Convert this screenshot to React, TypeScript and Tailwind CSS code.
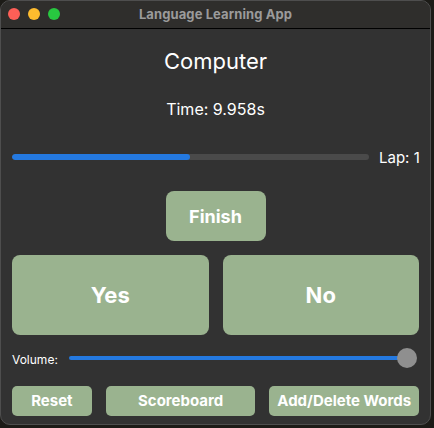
import React from "react";

export default function App() {
  const font = { fontFamily: "Inter, 'Noto Sans', 'Liberation Sans', sans-serif" };
  return (
    <div className="w-[434px] h-[428px] bg-[#1c1b17] overflow-hidden" style={font}>
      <div className="w-[431px] h-[425px] rounded-[10px] bg-[#323232] border border-[#4e4e4e] overflow-hidden flex flex-col">
        <div className="h-[28px] shrink-0 bg-[#2f2e2c] border-b border-black relative flex items-center justify-center">
          <div className="absolute left-[7px] top-[7px] flex gap-[8px]">
            <div className="w-[12px] h-[12px] rounded-full bg-[#fe5f57]" />
            <div className="w-[12px] h-[12px] rounded-full bg-[#febc2e]" />
            <div className="w-[12px] h-[12px] rounded-full bg-[#28c840]" />
          </div>
          <span className="text-[13px] font-bold text-[#9b9b9b] tracking-[0.1px]">Language Learning App</span>
        </div>
        <div className="flex flex-col px-[11px]">
          <div className="mt-[18px] h-[28px] flex items-center justify-center text-[22px] text-white leading-none">Computer</div>
          <div className="mt-[24px] h-[20px] flex items-center justify-center text-[16px] text-white leading-none">Time: 9.958s</div>
          <div className="mt-[28px] h-[20px] flex items-center">
            <div className="w-[357px] shrink-0 h-[6px] rounded-full bg-[#4a4a4a] overflow-hidden">
              <div className="h-full w-[178px] rounded-full bg-[#2479e0]" />
            </div>
            <span className="ml-[10px] text-[15px] text-white leading-none whitespace-nowrap">Lap: 1</span>
          </div>
          <div className="mt-[24px] flex justify-center">
            <button className="w-[100px] h-[50px] rounded-[8px] bg-[#9ab38f] text-white font-bold text-[18px]">Finish</button>
          </div>
          <div className="mt-[14px] flex gap-[14px]">
            <button className="w-[197px] h-[80px] rounded-[8px] bg-[#9ab38f] text-white font-bold text-[22px]">Yes</button>
            <button className="w-[197px] h-[80px] rounded-[8px] bg-[#9ab38f] text-white font-bold text-[22px]">No</button>
          </div>
          <div className="mt-[11px] h-[24px] flex items-center">
            <span className="text-[12px] text-white leading-none mt-[4px]">Volume:</span>
            <div className="ml-[11px] relative w-[348px] h-[24px] flex items-center">
              <div className="w-[338px] h-[4px] rounded-full bg-[#2479e0]" />
              <div className="absolute right-0 top-[2px] w-[20px] h-[20px] rounded-full bg-[#8f8f8f]" />
            </div>
          </div>
          <div className="mt-[16px] flex gap-[14px]">
            <button className="w-[80px] h-[30px] rounded-[5px] bg-[#9ab38f] text-white font-bold text-[15px]">Reset</button>
            <button className="w-[150px] h-[30px] rounded-[5px] bg-[#9ab38f] text-white font-bold text-[15px]">Scoreboard</button>
            <button className="w-[150px] h-[30px] rounded-[5px] bg-[#9ab38f] text-white font-bold text-[15px] whitespace-nowrap">Add/Delete Words</button>
          </div>
        </div>
      </div>
    </div>
  );
}
